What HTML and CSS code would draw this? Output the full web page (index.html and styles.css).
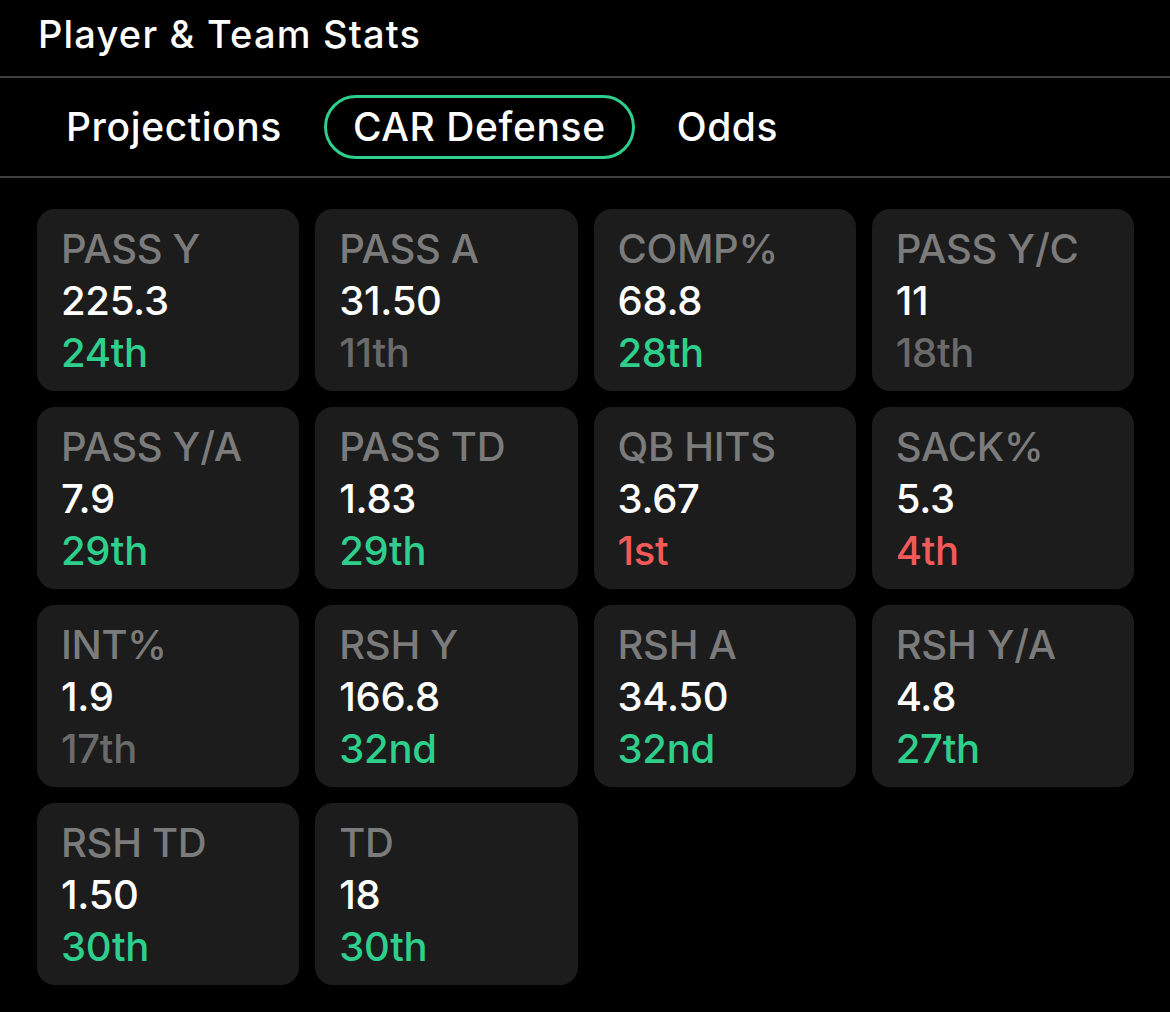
FILE: index.html
```html
<!DOCTYPE html>
<html>
<head>
<meta charset="utf-8">
<link rel="stylesheet" href="styles.css">
</head>
<body>
<div class="header">Player &amp; Team Stats</div>
<div class="tabs">
  <div class="tab">Projections</div>
  <div class="tab active">CAR Defense</div>
  <div class="tab">Odds</div>
</div>
<div class="grid">
  <div class="card"><div class="label">PASS Y</div><div class="value">225.3</div><div class="rank good">24th</div></div>
  <div class="card"><div class="label">PASS A</div><div class="value">31.50</div><div class="rank mid">11th</div></div>
  <div class="card"><div class="label">COMP%</div><div class="value">68.8</div><div class="rank good">28th</div></div>
  <div class="card"><div class="label">PASS Y/C</div><div class="value">11</div><div class="rank mid">18th</div></div>
  <div class="card"><div class="label">PASS Y/A</div><div class="value">7.9</div><div class="rank good">29th</div></div>
  <div class="card"><div class="label">PASS TD</div><div class="value">1.83</div><div class="rank good">29th</div></div>
  <div class="card"><div class="label">QB HITS</div><div class="value">3.67</div><div class="rank bad">1st</div></div>
  <div class="card"><div class="label">SACK%</div><div class="value">5.3</div><div class="rank bad">4th</div></div>
  <div class="card"><div class="label">INT%</div><div class="value">1.9</div><div class="rank mid">17th</div></div>
  <div class="card"><div class="label">RSH Y</div><div class="value">166.8</div><div class="rank good">32nd</div></div>
  <div class="card"><div class="label">RSH A</div><div class="value">34.50</div><div class="rank good">32nd</div></div>
  <div class="card"><div class="label">RSH Y/A</div><div class="value">4.8</div><div class="rank good">27th</div></div>
  <div class="card"><div class="label">RSH TD</div><div class="value">1.50</div><div class="rank good">30th</div></div>
  <div class="card"><div class="label">TD</div><div class="value">18</div><div class="rank good">30th</div></div>
</div>
</body>
</html>
```
FILE: styles.css
```css
html, body {
  margin: 0;
  padding: 0;
  background: #000;
  color: #fff;
  font-family: Inter, "Noto Sans", sans-serif;
}
body {
  width: 1170px;
  height: 1012px;
  overflow: hidden;
}
.header {
  height: 78px;
  box-sizing: border-box;
  padding-left: 38px;
  padding-top: 11px;
  font-size: 38px;
  font-weight: 500;
  line-height: 46px;
  letter-spacing: 1.2px;
  border-bottom: 2px solid #3e3e3e;
}
.tabs {
  display: flex;
  align-items: center;
  height: 100px;
  box-sizing: border-box;
  padding-left: 37px;
  gap: 13px;
  border-bottom: 2px solid #3e3e3e;
}
.tab {
  font-size: 39px;
  font-weight: 500;
  line-height: 58px;
  letter-spacing: 0.6px;
  padding: 0 26px;
  border: 3px solid transparent;
  border-radius: 40px;
}
.tab.active {
  border-color: #2ecf8d;
}
.grid {
  display: grid;
  grid-template-columns: repeat(4, 1fr);
  grid-auto-rows: 182px;
  gap: 16px;
  width: 1097px;
  padding: 31px 0 0 37px;
}
.card {
  background: #1c1c1c;
  border-radius: 18px;
  padding: 14px 0 0 24px;
  box-sizing: border-box;
}
.label, .value, .rank {
  font-size: 40px;
  line-height: 52px;
  font-weight: 500;
  letter-spacing: -0.3px;
}
.label { color: #7b7b7b; }
.value { color: #fff; }
.rank.good { color: #2ecf8d; }
.rank.mid { color: #6a6a6a; }
.rank.bad { color: #f25a5a; }
```
